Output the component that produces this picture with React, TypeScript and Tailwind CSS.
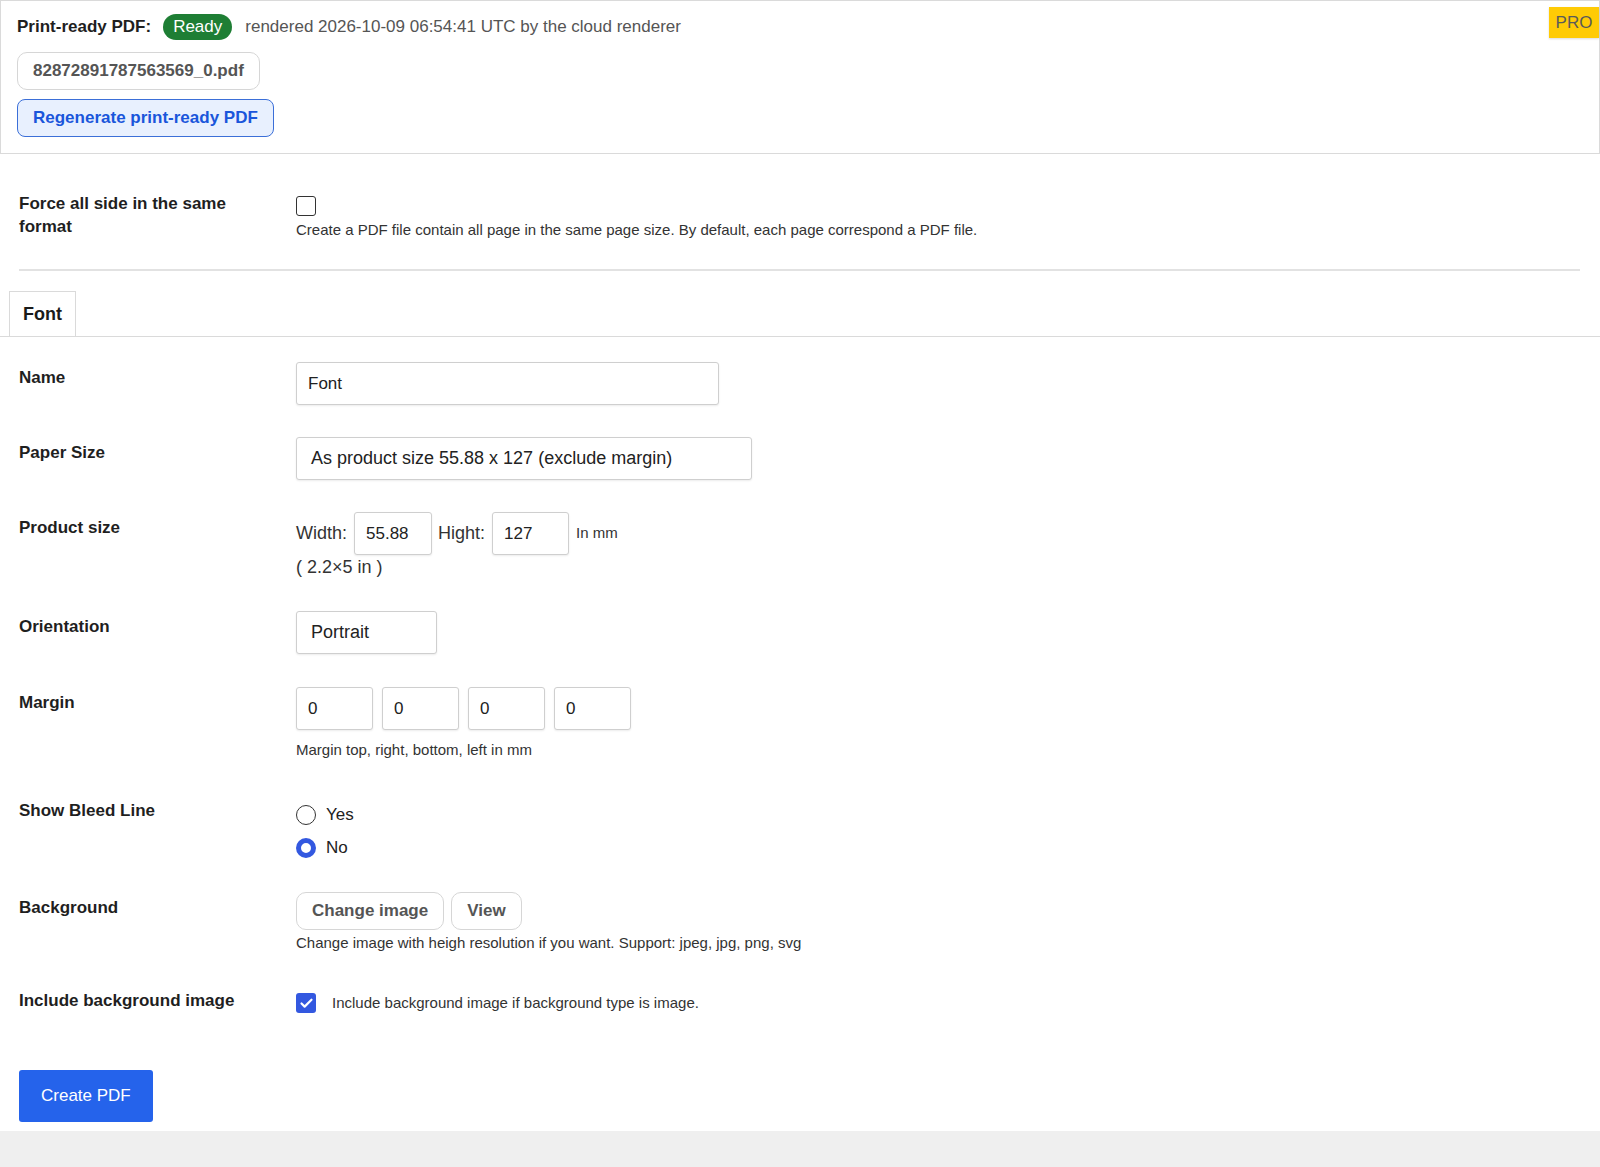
import { Check } from "lucide-react";

const label = "w-[277px] shrink-0 text-[17px] font-bold leading-[23px] text-[#1f1f1f]";
const field =
  "flex h-[43px] items-center rounded-[3px] border border-[#cfcfcf] bg-white text-[#222] shadow-[0_1px_2px_rgba(0,0,0,0.08)]";
const ghostBtn =
  "flex h-[38px] items-center rounded-[10px] border border-[#d6d6d6] bg-white px-[15px] text-[17px] font-bold text-[#555]";

function Radio({ checked, text }: { checked?: boolean; text: string }) {
  return (
    <div className="flex h-[33px] items-center gap-[10px]">
      {checked ? (
        <span className="h-[20px] w-[20px] rounded-full border-[5px] border-[#3358e0] bg-white" />
      ) : (
        <span className="h-[20px] w-[20px] rounded-full border-[1.5px] border-[#333] bg-white" />
      )}
      <span className="text-[17px] text-[#222]">{text}</span>
    </div>
  );
}

export default function App() {
  const margins = ["0", "0", "0", "0"];

  return (
    <div
      className="min-h-[1167px] bg-[#efefef]"
      style={{ fontFamily: '"Liberation Sans", Arial, sans-serif' }}
    >
      <div className="bg-white pb-[9px]">
        {/* print-ready status panel */}
        <div className="relative border border-[#dadada] pb-[16px] pl-4 pr-4 pt-[13px]">
          <div className="flex h-[26px] items-center">
            <span className="text-[17px] font-bold text-[#1f1f1f]">Print-ready PDF:</span>
            <span className="ml-[12px] flex h-[26px] items-center rounded-full bg-[#1e7e34] px-[10px] text-[17px] text-white">
              Ready
            </span>
            <span className="ml-[13px] text-[17px] text-[#555]">
              rendered 2026-10-09 06:54:41 UTC by the cloud renderer
            </span>
          </div>
          <div className="mt-[12px] flex">
            <span className={ghostBtn}>82872891787563569_0.pdf</span>
          </div>
          <div className="mt-[9px] flex">
            <button className="flex h-[38px] items-center rounded-[8px] border border-[#3b6fd8] bg-[#e8f0fe] px-[15px] text-[17px] font-bold text-[#1a56db]">
              Regenerate print-ready PDF
            </button>
          </div>
          <span className="absolute right-0 top-[6px] flex h-[31px] w-[50px] items-center justify-center bg-[#ffcb05] text-[17px] text-[#5a5a5a] shadow-[0_1px_2px_rgba(0,0,0,0.15)]">
            PRO
          </span>
        </div>

        {/* same format option */}
        <div className="pl-[19px] pr-[20px] pt-[38px]">
          <div className="flex">
            <div className={label}>
              Force all side in the same
              <br />
              format
            </div>
            <div className="pt-[4px]">
              <span className="block h-[20px] w-[20px] rounded-[3px] border-[1.5px] border-[#333] bg-white" />
              <p className="mt-[4px] text-[15px] leading-[20px] text-[#333]">
                Create a PDF file contain all page in the same page size. By default, each page correspond a PDF file.
              </p>
            </div>
          </div>
          <div className="mt-[29px] h-[2px] bg-[#e2e2e2]" />
        </div>

        {/* tabs */}
        <div className="mt-[20px] flex border-b border-[#dadada] pl-[9px]">
          <div className="flex h-[45px] items-center border-l border-r border-t border-[#dadada] px-[13px] text-[18px] font-bold text-[#1a1a1a]">
            Font
          </div>
        </div>

        {/* form rows */}
        <div className="px-[19px] pt-[25px]">
          <div className="flex">
            <div className={`${label} pt-[4px]`}>Name</div>
            <div className={`${field} w-[423px] pl-[11px] text-[17px]`}>Font</div>
          </div>

          <div className="mt-[32px] flex">
            <div className={`${label} pt-[4px]`}>Paper Size</div>
            <div className={`${field} w-[456px] pl-[14px] text-[18px]`}>
              As product size 55.88 x 127 (exclude margin)
            </div>
          </div>

          <div className="mt-[32px] flex">
            <div className={`${label} pt-[4px]`}>Product size</div>
            <div>
              <div className="flex items-center gap-[7px]">
                <span className="text-[18px] text-[#333]">Width:</span>
                <div className={`${field} w-[78px] pl-[11px] text-[17px]`}>55.88</div>
                <span className="ml-[-1px] text-[18px] text-[#333]">Hight:</span>
                <div className={`${field} w-[77px] pl-[11px] text-[17px]`}>127</div>
                <span className="text-[15px] text-[#333]">In mm</span>
              </div>
              <div className="text-[18px] leading-[24px] text-[#333]">( 2.2×5 in )</div>
            </div>
          </div>

          <div className="mt-[32px] flex">
            <div className={`${label} pt-[4px]`}>Orientation</div>
            <div className={`${field} w-[141px] pl-[14px] text-[18px]`}>Portrait</div>
          </div>

          <div className="mt-[33px] flex">
            <div className={`${label} pt-[4px]`}>Margin</div>
            <div>
              <div className="flex gap-[9px]">
                {margins.map((m, i) => (
                  <div key={i} className={`${field} w-[77px] pl-[11px] text-[17px]`}>
                    {m}
                  </div>
                ))}
              </div>
              <p className="mt-[10px] text-[15px] leading-[20px] text-[#333]">
                Margin top, right, bottom, left in mm
              </p>
            </div>
          </div>

          <div className="mt-[34px] flex">
            <div className={`${label} pt-[5px]`}>Show Bleed Line</div>
            <div className="pt-[4px]">
              <Radio text="Yes" />
              <Radio checked text="No" />
            </div>
          </div>

          <div className="mt-[28px] flex">
            <div className={`${label} pt-[4px]`}>Background</div>
            <div>
              <div className="flex gap-[7px]">
                <button className={ghostBtn}>Change image</button>
                <button className={ghostBtn}>View</button>
              </div>
              <p className="mt-[3px] text-[15px] leading-[20px] text-[#333]">
                Change image with heigh resolution if you want. Support: jpeg, jpg, png, svg
              </p>
            </div>
          </div>

          <div className="mt-[36px] flex">
            <div className={label}>Include background image</div>
            <div className="flex items-center gap-[16px] pt-[3px]">
              <span className="flex h-[20px] w-[20px] items-center justify-center rounded-[3px] bg-[#3358e0]">
                <Check className="h-[15px] w-[15px] text-white" strokeWidth={3.5} />
              </span>
              <span className="text-[15px] text-[#333]">
                Include background image if background type is image.
              </span>
            </div>
          </div>

          <button className="mt-[55px] h-[52px] rounded-[3px] bg-[#2563eb] px-[22px] text-[17px] text-white">
            Create PDF
          </button>
        </div>
      </div>
    </div>
  );
}
